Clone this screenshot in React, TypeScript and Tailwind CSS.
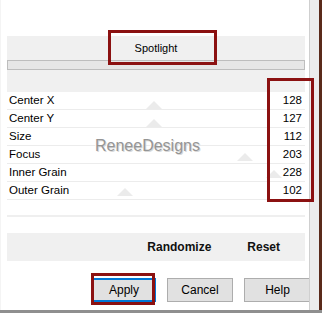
const rows = [
  { label: 'Center X', value: 128 },
  { label: 'Center Y', value: 127 },
  { label: 'Size', value: 112 },
  { label: 'Focus', value: 203 },
  { label: 'Inner Grain', value: 228 },
  { label: 'Outer Grain', value: 102 },
];

// faint slider thumbs left behind in the rows
const marks = [
  { x: 146, y: 101 },
  { x: 146, y: 119 },
  { x: 237, y: 153 },
  { x: 266, y: 170 },
  { x: 117, y: 188 },
];

export default function App() {
  return (
    <div className="relative w-[322px] h-[313px] overflow-hidden bg-white text-black font-['Liberation_Sans',Arial,sans-serif] text-[11px]">
      <div className="flex h-[310px]">
        {/* panel */}
        <div className="flex flex-col w-[309px] pl-[6px] pr-[4px] border-l border-[#f4f4f4]">
          <div className="h-[36px] bg-white" />
          <div className="h-[24px] bg-[#f0f0f0] flex items-center justify-center">
            <span className="pt-[1px]">Spotlight</span>
          </div>
          <div className="h-[10px] bg-[#e6e6e6] border border-[#bdbdbd]" />
          <div className="h-[22px] bg-[#f0f0f0]" />
          {rows.map((r) => (
            <div
              key={r.label}
              className="h-[18px] flex items-center justify-between border-b border-[#ececec] pl-[2px] pr-[3px] leading-none text-[11.5px]"
            >
              <span>{r.label}</span>
              <span>{r.value}</span>
            </div>
          ))}
          <div className="h-[17px] border-b-2 border-[#efefef]" />
          <div className="h-[16px]" />
          <div className="h-[28px] bg-[#f0f0f0] flex items-center justify-end gap-[36px] pr-[25px] text-[12px] font-bold text-[#111]">
            <span>Randomize</span>
            <span>Reset</span>
          </div>
          <div className="flex-1 flex items-end justify-end pb-[8px] gap-[11px] -mr-[6px]">
            <button className="w-[64px] h-[24px] bg-[#e1e1e1] border-2 border-[#0078d7] text-[12px]">
              Apply
            </button>
            <button className="w-[66px] h-[24px] bg-[#e1e1e1] border border-[#adadad] text-[12px]">
              Cancel
            </button>
            <button className="w-[67px] h-[24px] bg-[#e1e1e1] border border-[#adadad] text-[12px]">
              Help
            </button>
          </div>
        </div>
        {/* right edge strip */}
        <div className="w-[1px] bg-[#cfcfcf]" />
        <div className="w-[9px] bg-[#ececec]" />
        <div className="w-[3px] bg-[#5a2a1a]" />
      </div>
      <div className="h-[3px] bg-[#8f8f8f]" />

      {marks.map((m, i) => (
        <svg
          key={i}
          className="absolute"
          style={{ left: m.x, top: m.y }}
          width="16"
          height="8"
          viewBox="0 0 16 8"
        >
          <polygon points="0,8 8,0 16,8" fill="#ebebeb" />
        </svg>
      ))}

      {/* watermark */}
      <div className="absolute left-[95px] top-[134px] text-[16px] text-[#959595] [text-shadow:1px_1px_0_#d8d8d8,-1px_-1px_0_#fff]">
        ReneeDesigns
      </div>

      {/* annotation boxes */}
      <div className="absolute left-[108px] top-[30px] w-[109px] h-[35px] border-[3px] border-[#8b1111]" />
      <div className="absolute left-[267px] top-[78px] w-[47px] h-[124px] border-[3px] border-[#8b1111]" />
      <div className="absolute left-[91px] top-[273px] w-[64px] h-[32px] border-[3px] border-[#8b1111]" />
    </div>
  );
}
